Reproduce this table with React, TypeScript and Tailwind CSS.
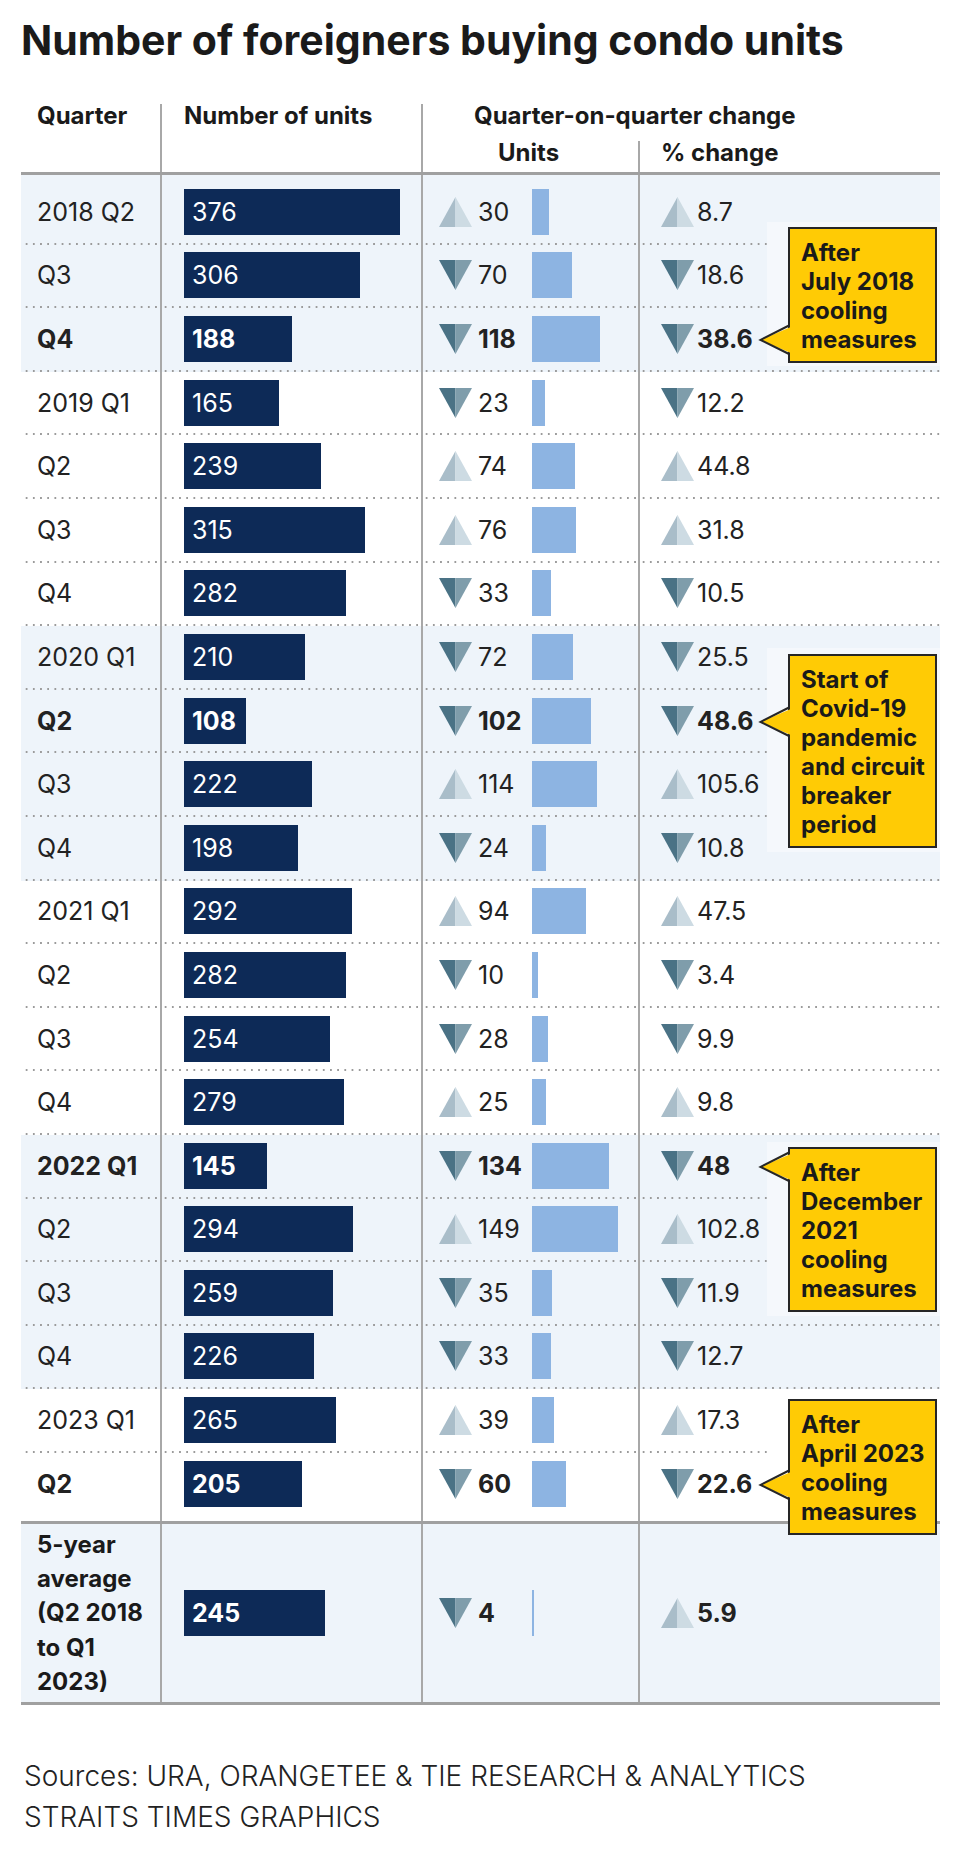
import React from "react";

type Dir = "up" | "down";
type Row = { q: string; n: number; cd: Dir; c: number; pd: Dir; p: string; bold?: boolean; blue: boolean };

const rows: Row[] = [
  { q: "2018 Q2", n: 376, cd: "up", c: 30, pd: "up", p: "8.7", blue: true },
  { q: "Q3", n: 306, cd: "down", c: 70, pd: "down", p: "18.6", blue: true },
  { q: "Q4", n: 188, cd: "down", c: 118, pd: "down", p: "38.6", bold: true, blue: true },
  { q: "2019 Q1", n: 165, cd: "down", c: 23, pd: "down", p: "12.2", blue: false },
  { q: "Q2", n: 239, cd: "up", c: 74, pd: "up", p: "44.8", blue: false },
  { q: "Q3", n: 315, cd: "up", c: 76, pd: "up", p: "31.8", blue: false },
  { q: "Q4", n: 282, cd: "down", c: 33, pd: "down", p: "10.5", blue: false },
  { q: "2020 Q1", n: 210, cd: "down", c: 72, pd: "down", p: "25.5", blue: true },
  { q: "Q2", n: 108, cd: "down", c: 102, pd: "down", p: "48.6", bold: true, blue: true },
  { q: "Q3", n: 222, cd: "up", c: 114, pd: "up", p: "105.6", blue: true },
  { q: "Q4", n: 198, cd: "down", c: 24, pd: "down", p: "10.8", blue: true },
  { q: "2021 Q1", n: 292, cd: "up", c: 94, pd: "up", p: "47.5", blue: false },
  { q: "Q2", n: 282, cd: "down", c: 10, pd: "down", p: "3.4", blue: false },
  { q: "Q3", n: 254, cd: "down", c: 28, pd: "down", p: "9.9", blue: false },
  { q: "Q4", n: 279, cd: "up", c: 25, pd: "up", p: "9.8", blue: false },
  { q: "2022 Q1", n: 145, cd: "down", c: 134, pd: "down", p: "48", bold: true, blue: true },
  { q: "Q2", n: 294, cd: "up", c: 149, pd: "up", p: "102.8", blue: true },
  { q: "Q3", n: 259, cd: "down", c: 35, pd: "down", p: "11.9", blue: true },
  { q: "Q4", n: 226, cd: "down", c: 33, pd: "down", p: "12.7", blue: true },
  { q: "2023 Q1", n: 265, cd: "up", c: 39, pd: "up", p: "17.3", blue: false },
  { q: "Q2", n: 205, cd: "down", c: 60, pd: "down", p: "22.6", bold: true, blue: false },
];

const SCALE = 0.5745;
const DOT =
  "h-[2px] bg-[image:radial-gradient(circle,#9b9b9b_0.9px,transparent_1.3px)] bg-[length:7.2px_2px] bg-repeat-x";

function Tri({ dir }: { dir: Dir }) {
  if (dir === "up") {
    return (
      <svg width="33" height="30" viewBox="0 0 33 30" className="shrink-0">
        <polygon points="0,30 16.5,0 16.5,30" fill="#a9bdc9" />
        <polygon points="16.5,0 33,30 16.5,30" fill="#cddbe3" />
      </svg>
    );
  }
  return (
    <svg width="33" height="30" viewBox="0 0 33 30" className="shrink-0">
      <polygon points="0,0 16.5,0 16.5,30" fill="#4a7285" />
      <polygon points="16.5,0 33,0 16.5,30" fill="#7f9dab" />
    </svg>
  );
}

function DataRow({ r, first, last }: { r: Row; first: boolean; last: boolean }) {
  const h = first ? "h-[69.6px] pt-[6px]" : last ? "h-[68.6px] pb-[5px]" : "h-[63.6px]";
  const dot = last ? "h-[2px]" : DOT;
  const weight = r.bold ? "font-bold" : "font-normal";
  return (
    <div className={`flex ${r.blue ? "bg-[#eef4fa]" : "bg-white"} ${weight}`}>
      <div className={`flex w-[139px] flex-col ${h}`}>
        <div className="flex flex-1 items-center pl-[16px]">{r.q}</div>
        <div className={`${dot} ml-[2px]`} />
      </div>
      <div className={`flex w-[261px] flex-col border-l-2 border-[#a8a8a8] ${h}`}>
        <div className="flex flex-1 items-center pl-[22px]">
          <div
            className="flex h-[46px] items-center bg-[#0d2a57] pl-[8px] text-white"
            style={{ width: `${r.n * SCALE}px` }}
          >
            {r.n}
          </div>
        </div>
        <div className={dot} />
      </div>
      <div className={`flex w-[217px] flex-col border-l-2 border-[#a8a8a8] ${h}`}>
        <div className="flex flex-1 items-center pl-[16px]">
          <Tri dir={r.cd} />
          <div className="w-[60px] pl-[6px]">{r.c}</div>
          <div className="h-[46px] bg-[#8db4e2]" style={{ width: `${r.c * SCALE}px` }} />
        </div>
        <div className={dot} />
      </div>
      <div className={`flex w-[302px] flex-col border-l-2 border-[#a8a8a8] ${h}`}>
        <div className="flex flex-1 items-center pl-[21px]">
          <Tri dir={r.pd} />
          <div className="pl-[3px]">{r.p}</div>
        </div>
        <div className={dot} />
      </div>
    </div>
  );
}

function Callout({
  top,
  tip,
  lines,
}: {
  top: number;
  tip: number;
  lines: string[];
}) {
  return (
    <div
      className="absolute left-[788px] w-[149px] border-2 border-[#262626] bg-[#ffcb05] pb-[7px] pl-[11px] pt-[9px] text-[24px] font-bold leading-[29px] text-[#1a1a1a]"
      style={{ top: `${top}px` }}
    >
      <svg
        width="33"
        height="30"
        viewBox="0 0 33 30"
        className="absolute left-[-31px] overflow-visible"
        style={{ top: `${tip - top - 2 - 15}px` }}
      >
        <polygon points="33,1.5 1.5,15 33,28.5" fill="#ffcb05" />
        <polyline points="30,0.5 1.5,15 30,29" fill="none" stroke="#262626" strokeWidth="2" />
      </svg>
      {lines.map((l) => (
        <div key={l} className="whitespace-nowrap">
          {l}
        </div>
      ))}
    </div>
  );
}

export default function App() {
  return (
    <div className="relative min-h-[1862px] w-[960px] bg-white font-['Inter',sans-serif] text-[#222]">
      <div className="px-[21px] pt-[20px]">
        <h1 className="text-[41px] font-bold leading-[41px] text-[#1a1a1a]">
          Number of foreigners buying condo units
        </h1>

        <div className="mt-[43px] w-[919px]">
          {/* header */}
          <div className="flex h-[68px] text-[24px] font-bold leading-[24px] text-[#1a1a1a]">
            <div className="w-[139px] pl-[16px]">Quarter</div>
            <div className="w-[261px] border-l-2 border-[#a8a8a8] pl-[22px]">Number of units</div>
            <div className="flex w-[519px] flex-col border-l-2 border-[#a8a8a8]">
              <div className="pl-[51px]">Quarter-on-quarter change</div>
              <div className="mt-[13px] flex flex-1">
                <div className="w-[215px] pl-[75px]">Units</div>
                <div className="w-[302px] border-l-2 border-[#a8a8a8] pl-[21px]">% change</div>
              </div>
            </div>
          </div>
          <div className="h-[3px] bg-[#a0a0a0]" />

          {/* body */}
          <div className="text-[25px] leading-[30px]">
            {rows.map((r, i) => (
              <DataRow key={i} r={r} first={i === 0} last={i === rows.length - 1} />
            ))}
          </div>
          <div className="h-[3px] bg-[#a0a0a0]" />

          {/* average */}
          <div className="flex h-[178px] bg-[#eef4fa] text-[25px] font-bold leading-[30px]">
            <div className="flex w-[139px] items-center pl-[16px] text-[24px] leading-[34.3px] text-[#1a1a1a]">
              <div>
                5-year
                <br />
                average
                <br />
                (Q2 2018
                <br />
                to Q1
                <br />
                2023)
              </div>
            </div>
            <div className="flex w-[261px] items-center border-l-2 border-[#a8a8a8] pl-[22px]">
              <div
                className="flex h-[46px] items-center bg-[#0d2a57] pl-[8px] text-white"
                style={{ width: `${245 * SCALE}px` }}
              >
                245
              </div>
            </div>
            <div className="flex w-[217px] items-center border-l-2 border-[#a8a8a8] pl-[16px]">
              <Tri dir="down" />
              <div className="w-[60px] pl-[6px]">4</div>
              <div className="h-[46px] bg-[#8db4e2]" style={{ width: `${4 * SCALE}px` }} />
            </div>
            <div className="flex w-[302px] items-center border-l-2 border-[#a8a8a8] pl-[21px]">
              <Tri dir="up" />
              <div className="pl-[3px]">5.9</div>
            </div>
          </div>
          <div className="h-[3px] bg-[#a0a0a0]" />
        </div>

        <div className="mt-[51px] pl-[3px] text-[28px] font-light leading-[41px] text-[#222]">
          <div>Sources: URA, ORANGETEE &amp; TIE RESEARCH &amp; ANALYTICS</div>
          <div>STRAITS TIMES GRAPHICS</div>
        </div>
      </div>

      {/* masks behind callouts */}
      <div className="absolute left-[767px] top-[222px] h-[144px] w-[173px] bg-[#f5f8fc]" />
      <div className="absolute left-[767px] top-[648px] h-[204px] w-[173px] bg-[#f5f8fc]" />
      <div className="absolute left-[767px] top-[1142px] h-[174px] w-[173px] bg-[#f5f8fc]" />
      <div className="absolute left-[767px] top-[1394px] h-[125px] w-[173px] bg-white" />

      <Callout top={227} tip={340} lines={["After", "July 2018", "cooling", "measures"]} />
      <Callout
        top={654}
        tip={722}
        lines={["Start of", "Covid-19", "pandemic", "and circuit", "breaker", "period"]}
      />
      <Callout top={1147} tip={1167} lines={["After", "December", "2021", "cooling", "measures"]} />
      <Callout top={1399} tip={1485} lines={["After", "April 2023", "cooling", "measures"]} />
    </div>
  );
}
